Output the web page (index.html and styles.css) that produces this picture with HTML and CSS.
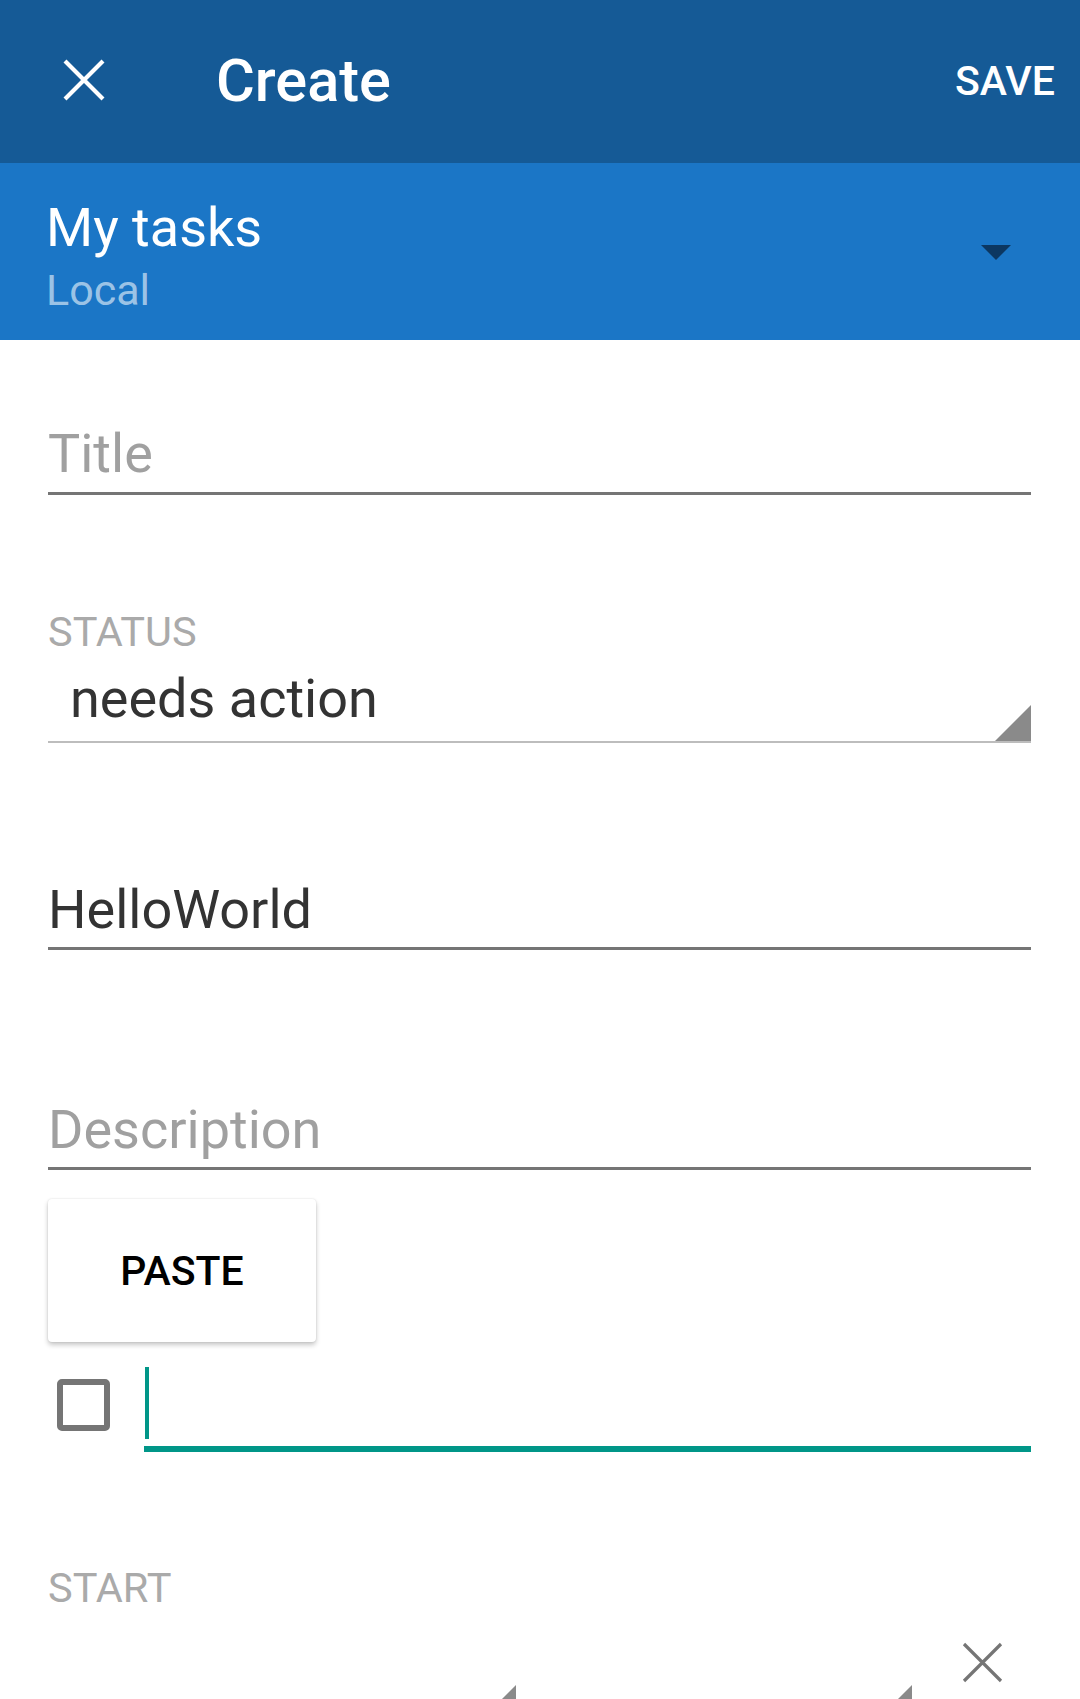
FILE: index.html
```html
<!DOCTYPE html>
<html lang="en">
<head>
<meta charset="utf-8">
<title>Create</title>
<link rel="stylesheet" href="styles.css">
</head>
<body>
<div class="app">
  <header class="toolbar">
    <svg class="close-icon" width="42" height="42" viewBox="0 0 42 42" aria-hidden="true">
      <path d="M2 2 L40 40 M40 2 L2 40" stroke="#ffffff" stroke-width="4.2" fill="none"/>
    </svg>
    <h1 class="toolbar-title">Create</h1>
    <span class="toolbar-action">SAVE</span>
  </header>

  <div class="list-picker">
    <div class="list-names">
      <div class="list-name">My tasks</div>
      <div class="list-account">Local</div>
    </div>
    <span class="caret"></span>
  </div>

  <main class="form">
    <div class="field field-title"><span class="placeholder">Title</span></div>

    <div class="label label-status">STATUS</div>
    <div class="spinner spinner-status">
      <span class="spinner-text">needs action</span>
      <span class="spinner-tri"></span>
    </div>

    <div class="field field-location"><span class="value">HelloWorld</span></div>

    <div class="field field-desc"><span class="placeholder">Description</span></div>

    <div class="paste-popup">PASTE</div>

    <div class="check-row">
      <span class="checkbox"></span>
      <div class="check-input"><span class="cursor"></span></div>
    </div>

    <div class="label label-start">START</div>
    <div class="date-row">
      <div class="spinner spinner-date"><span class="spinner-tri"></span></div>
      <div class="spinner spinner-time"><span class="spinner-tri"></span></div>
      <svg class="clear-icon" width="41" height="41" viewBox="0 0 41 41" aria-hidden="true">
        <path d="M2 2 L39 39 M39 2 L2 39" stroke="#757575" stroke-width="3.2" fill="none"/>
      </svg>
    </div>
  </main>
</div>
</body>
</html>
```

FILE: styles.css
```css
html, body {
  margin: 0;
  padding: 0;
  height: 1699px;
  overflow: hidden;
  background: #ffffff;
}

body {
  font-family: Roboto, "Noto Sans", "Liberation Sans", sans-serif;
  color: #333333;
}

.app {
  width: 1080px;
}

/* Toolbar */
.toolbar {
  height: 163px;
  background: #155a96;
  display: flex;
  align-items: center;
  padding: 0 25px 0 63px;
  box-sizing: border-box;
  color: #ffffff;
}

.close-icon {
  display: block;
  margin-bottom: 4px;
}

.toolbar-title {
  margin: 0 0 0 111px;
  font-size: 59.5px;
  font-weight: 500;
  line-height: 1.17;
}

.toolbar-action {
  margin-left: auto;
  font-size: 41px;
  font-weight: 500;
  line-height: 1.17;
}

/* List picker */
.list-picker {
  height: 177px;
  background: #1b76c6;
  display: flex;
  justify-content: space-between;
  align-items: center;
  padding: 0 69px 0 46px;
  box-sizing: border-box;
}

.list-names {
  align-self: flex-start;
  padding-top: 34px;
}

.list-name {
  font-size: 54px;
  line-height: 61px;
  color: #ffffff;
}

.list-account {
  margin-top: 8px;
  font-size: 43px;
  line-height: 48px;
  color: rgba(255, 255, 255, 0.58);
}

.caret {
  width: 0;
  height: 0;
  border-left: 15px solid transparent;
  border-right: 15px solid transparent;
  border-top: 15px solid #0c3761;
  margin-top: 2px;
}

/* Form */
.form {
  padding: 0 49px 0 48px;
}

.field {
  font-size: 54px;
  line-height: 61px;
  border-bottom: 3px solid #757575;
}

.placeholder {
  color: #a0a0a0;
}

.value {
  color: #333333;
}

.field-title {
  margin-top: 83px;
  padding-bottom: 8px;
}

.label {
  font-size: 41.5px;
  line-height: 48px;
  color: #aaaaaa;
}

.label-status {
  margin-top: 113px;
}

.spinner {
  display: flex;
  justify-content: space-between;
  align-items: flex-end;
}

.spinner-status {
  margin-top: 12px;
  border-bottom: 2px solid #bdbdbd;
}

.spinner-text {
  font-size: 54px;
  line-height: 61px;
  padding: 0 0 12px 22px;
  color: #333333;
}

.spinner-tri {
  width: 36px;
  height: 36px;
  background: #8a8a8a;
  clip-path: polygon(100% 0, 100% 100%, 0 100%);
  flex: none;
}

.field-location {
  margin-top: 136px;
  padding-bottom: 7px;
}

.field-desc {
  margin-top: 149px;
  padding-bottom: 7px;
}

/* Paste popup */
.paste-popup {
  margin-top: 29px;
  width: 268px;
  height: 143px;
  background: #ffffff;
  border-radius: 4px;
  box-shadow: 0 3px 5px rgba(0, 0, 0, 0.22), 0 0 2px rgba(0, 0, 0, 0.12);
  display: flex;
  align-items: center;
  justify-content: center;
  font-size: 41px;
  font-weight: 500;
  color: #000000;
}

/* Checklist row */
.check-row {
  margin-top: 25px;
  display: flex;
  align-items: flex-start;
}

.checkbox {
  width: 53px;
  height: 52px;
  box-sizing: border-box;
  border: 6px solid #757575;
  border-radius: 5px;
  margin: 12px 0 0 9px;
  flex: none;
}

.check-input {
  flex: 1;
  margin-left: 34px;
  height: 79px;
  border-bottom: 6px solid #009688;
  padding-left: 1px;
}

.cursor {
  display: block;
  width: 4px;
  height: 72px;
  background: #009688;
}

/* Start */
.label-start {
  margin-top: 112px;
}

.date-row {
  margin-top: 18px;
  display: flex;
  align-items: flex-start;
}

.spinner-date {
  width: 468px;
  height: 91px;
  justify-content: flex-end;
}

.spinner-time {
  width: 372px;
  height: 91px;
  margin-left: 24px;
  justify-content: flex-end;
}

.clear-icon {
  display: block;
  margin: 12px 0 0 50px;
  flex: none;
}
```
